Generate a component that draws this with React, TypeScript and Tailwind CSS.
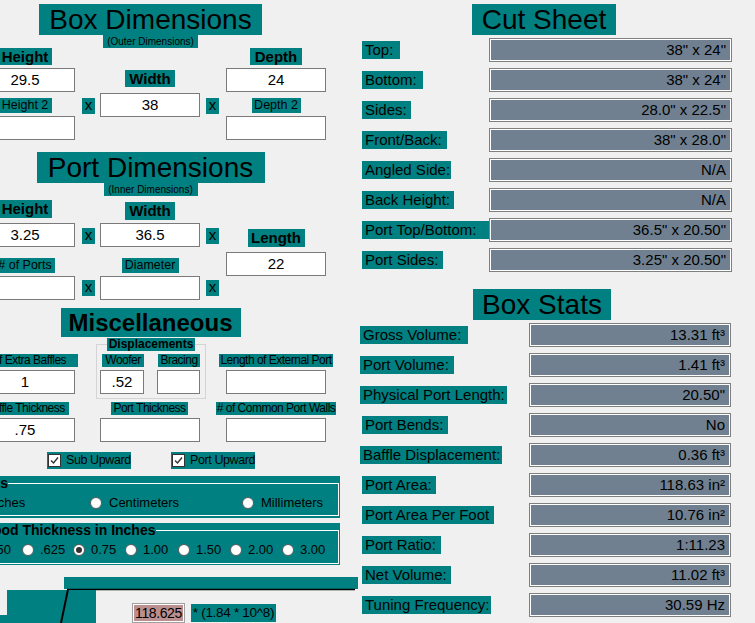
import React from "react";

const Box = ({ v, className = "" }: { v?: string; className?: string }) => (
  <div className={"h-[24px] w-[100px] border border-[#7a7a7a] bg-white text-center text-[15px] leading-[22px] " + className}>{v}</div>
);

const X = ({ className = "" }: { className?: string }) => (
  <div className={"h-[16px] w-[13px] bg-[#008080] text-center text-[15px] leading-[14px] " + className}>x</div>
);

const Radio = ({ checked }: { checked?: boolean }) => (
  <span className="flex h-[12px] w-[12px] shrink-0 items-center justify-center rounded-full border border-[#5a5a5a] bg-white">
    {checked && <span className="h-[6px] w-[6px] rounded-full bg-[#333]" />}
  </span>
);

const Check = ({ label }: { label: string }) => (
  <div className="flex h-[17px] w-[84px] items-center gap-[5px] whitespace-nowrap bg-[#008080] pl-[1px] text-[12.5px] tracking-[-0.4px]">
    <span className="flex h-[13px] w-[13px] shrink-0 items-center justify-center border border-[#333] bg-white">
      <svg width="9" height="9" viewBox="0 0 9 9">
        <path d="M1 4.5 L3.5 7 L8 1.5" stroke="#333" strokeWidth="1.4" fill="none" />
      </svg>
    </span>
    <span className="leading-[17px]">{label}</span>
  </div>
);

const Field = ({ v, className = "" }: { v: string; className?: string }) => (
  <div className={"ml-auto h-[24px] border border-[#7f7f7f] bg-[#708090] pr-[5px] text-right text-[15px] leading-[22px] shadow-[inset_0_0_0_1px_#ffffff] " + className}>{v}</div>
);

const cut: [string, string, string][] = [
  ["Top:", "w-[38px]", '38" x 24"'],
  ["Bottom:", "w-[61px]", '38" x 24"'],
  ["Sides:", "w-[49px]", '28.0" x 22.5"'],
  ["Front/Back:", "w-[85px]", '38" x 28.0"'],
  ["Angled Side:", "w-[89px]", "N/A"],
  ["Back Height:", "w-[92px]", "N/A"],
  ["Port Top/Bottom:", "w-[127px]", '36.5" x 20.50"'],
  ["Port Sides:", "w-[81px]", '3.25" x 20.50"'],
];

const stats: [string, string, string][] = [
  ["Gross Volume:", "w-[108px]", "13.31 ft³"],
  ["Port Volume:", "w-[94px]", "1.41 ft³"],
  ["Physical Port Length:", "w-[147px]", '20.50"'],
  ["Port Bends:", "ml-[2px] w-[86px]", "No"],
  ["Baffle Displacement:", "w-[142px]", "0.36 ft³"],
  ["Port Area:", "ml-[2px] w-[74px]", "118.63 in²"],
  ["Port Area Per Foot", "ml-[2px] w-[132px]", "10.76 in²"],
  ["Port Ratio:", "ml-[2px] w-[79px]", "1:11.23"],
  ["Net Volume:", "ml-[2px] w-[89px]", "11.02 ft³"],
  ["Tuning Frequency:", "ml-[2px] w-[129px]", "30.59 Hz"],
];

const ply: [string, string][] = [
  [".50", "w-[47px]"],
  [".625", "w-[51px]"],
  ["0.75", "w-[52px]"],
  ["1.00", "w-[53px]"],
  ["1.50", "w-[52px]"],
  ["2.00", "w-[52px]"],
  ["3.00", "w-[52px]"],
];

const small = "h-[13px] shrink-0 whitespace-nowrap bg-[#008080] text-center text-[12px] leading-[13px] tracking-[-0.5px]";

export default function App() {
  return (
    <div className="flex h-[623px] w-[755px] overflow-hidden bg-[#f0f0f0] font-['Liberation_Sans',Arial,sans-serif] text-black">
      {/* LEFT */}
      <div className="ml-[-25px] flex w-[385px] shrink-0 flex-col">
        <div className="flex w-[351px] flex-col">
          {/* Box Dimensions */}
          <div className="mx-auto mt-[4px] h-[31px] w-[223px] whitespace-nowrap bg-[#008080] text-center text-[28px] leading-[31px]">Box Dimensions</div>
          <div className="mx-auto h-[13px] w-[95px] whitespace-nowrap bg-[#008080] text-center text-[10px] leading-[13px]">(Outer Dimensions)</div>
          <div className="flex items-start">
            <div className="flex w-[100px] flex-col items-center">
              <div className="h-[17px] w-[53px] bg-[#008080] text-center text-[15px] font-bold leading-[17px]">Height</div>
              <Box v="29.5" className="mt-[3px]" />
              <div className="mt-[6px] h-[15px] w-[53px] whitespace-nowrap bg-[#008080] text-center text-[12.5px] leading-[15px]">Height 2</div>
              <Box className="mt-[3px]" />
            </div>
            <X className="ml-[7px] mt-[50px]" />
            <div className="ml-[5px] flex w-[100px] flex-col items-center">
              <div className="mt-[22px] h-[17px] w-[50px] bg-[#008080] text-center text-[15px] font-bold leading-[17px]">Width</div>
              <Box v="38" className="mt-[6px]" />
            </div>
            <X className="ml-[6px] mt-[50px]" />
            <div className="ml-[7px] flex w-[100px] flex-col items-center">
              <div className="h-[17px] w-[52px] bg-[#008080] text-center text-[15px] font-bold leading-[17px]">Depth</div>
              <Box v="24" className="mt-[3px]" />
              <div className="mt-[6px] h-[15px] w-[49px] whitespace-nowrap bg-[#008080] text-center text-[12.5px] leading-[15px]">Depth 2</div>
              <Box className="mt-[3px]" />
            </div>
          </div>

          {/* Port Dimensions */}
          <div className="mx-auto mt-[12px] h-[31px] w-[228px] whitespace-nowrap bg-[#008080] text-center text-[28px] leading-[31px]">Port Dimensions</div>
          <div className="mx-auto h-[13px] w-[94px] whitespace-nowrap bg-[#008080] text-center text-[10px] leading-[13px]">(Inner Dimensions)</div>
          <div className="mt-[4px] flex items-start">
            <div className="flex w-[100px] flex-col items-center">
              <div className="h-[18px] w-[53px] bg-[#008080] text-center text-[15px] font-bold leading-[18px]">Height</div>
              <Box v="3.25" className="mt-[5px]" />
              <div className="mt-[11px] h-[15px] w-[60px] whitespace-nowrap bg-[#008080] text-center text-[12.5px] leading-[15px]"># of Ports</div>
              <Box className="mt-[3px]" />
            </div>
            <div className="ml-[7px] flex flex-col">
              <X className="mt-[28px]" />
              <X className="mt-[36px]" />
            </div>
            <div className="ml-[5px] flex w-[100px] flex-col items-center">
              <div className="mt-[2px] h-[18px] w-[50px] bg-[#008080] text-center text-[15px] font-bold leading-[18px]">Width</div>
              <Box v="36.5" className="mt-[3px]" />
              <div className="mt-[11px] h-[15px] w-[57px] whitespace-nowrap bg-[#008080] text-center text-[12.5px] leading-[15px]">Diameter</div>
              <Box className="mt-[3px]" />
            </div>
            <div className="ml-[6px] flex flex-col">
              <X className="mt-[28px]" />
              <X className="mt-[36px]" />
            </div>
            <div className="ml-[7px] flex w-[100px] flex-col items-center">
              <div className="mt-[29px] h-[18px] w-[57px] bg-[#008080] text-center text-[15px] font-bold leading-[18px]">Length</div>
              <Box v="22" className="mt-[5px]" />
            </div>
          </div>

          {/* Miscellaneous */}
          <div className="mx-auto mt-[8px] h-[29px] w-[180px] whitespace-nowrap bg-[#008080] text-center text-[24px] font-bold leading-[29px]">Miscellaneous</div>
          <div className="flex items-start">
            <div className="flex w-[100px] flex-col items-center">
              <div className={"mt-[17px] w-[105px] " + small}># of Extra Baffles</div>
              <Box v="1" className="mt-[3px]" />
              <div className={"mt-[8px] w-[88px] " + small}>Baffle Thickness</div>
              <Box v=".75" className="mt-[3px]" />
            </div>
            <div className="ml-[21px] flex w-[110px] flex-col">
              <fieldset className="mt-[1px] border border-[#d4d4d4] pb-[4px]">
                <legend className="mx-auto h-[13px] w-[88px] whitespace-nowrap bg-[#008080] text-center text-[12px] font-bold leading-[13px]">Displacements</legend>
                <div className="flex pt-[3px]">
                  <div className="ml-[3px] flex w-[44px] flex-col">
                    <div className={"ml-[2px] w-[42px] " + small}>Woofer</div>
                    <Box v=".52" className="mt-[3px] !w-[44px]" />
                  </div>
                  <div className="ml-[13px] flex w-[43px] flex-col">
                    <div className={"ml-[1px] w-[42px] " + small}>Bracing</div>
                    <Box className="mt-[3px] !w-[43px]" />
                  </div>
                </div>
              </fieldset>
              <div className={"ml-[15px] mt-[3px] w-[77px] " + small}>Port Thickness</div>
              <Box className="ml-[4px] mt-[3px]" />
            </div>
            <div className="ml-[20px] flex w-[100px] flex-col items-center">
              <div className={"mt-[17px] w-[114px] " + small}>Length of External Port</div>
              <Box className="mt-[3px]" />
              <div className={"mt-[8px] w-[120px] " + small}># of Common Port Walls</div>
              <Box className="mt-[3px]" />
            </div>
          </div>
          <div className="mt-[10px] flex">
            <div className="ml-[72px]"><Check label="Sub Upward" /></div>
            <div className="ml-[40px]"><Check label="Port Upward" /></div>
          </div>
        </div>

        {/* Units */}
        <div className="ml-[-23px] mt-[7px] h-[42px] w-[388px] shrink-0 bg-[#008080]">
          <fieldset className="h-[40px] w-[387px] border border-white">
            <legend className="ml-[20px] whitespace-nowrap text-[14px] font-bold leading-[15px]">Units</legend>
            <div className="flex h-[24px] items-center whitespace-nowrap pl-[15px] text-[13px]">
              <div className="flex w-[122px] items-center gap-[7px]"><Radio /><span>Inches</span></div>
              <div className="flex w-[152px] items-center gap-[7px]"><Radio /><span>Centimeters</span></div>
              <div className="flex items-center gap-[7px]"><Radio /><span>Millimeters</span></div>
            </div>
          </fieldset>
        </div>

        {/* Plywood */}
        <div className="ml-[-23px] mt-[5px] h-[42px] w-[388px] shrink-0 bg-[#008080]">
          <fieldset className="h-[41px] w-[387px] border border-white">
            <legend className="ml-[8px] whitespace-nowrap text-[14px] font-bold leading-[15px]">Plywood Thickness in Inches</legend>
            <div className="flex h-[24px] items-center whitespace-nowrap pl-[22px] text-[13px]">
              {ply.map(([t, w]) => (
                <div key={t} className={"flex shrink-0 items-center gap-[6px] " + w}>
                  <Radio checked={t === "0.75"} />
                  <span>{t}</span>
                </div>
              ))}
            </div>
          </fieldset>
        </div>

        {/* Drawing */}
        <div className="relative mt-[12px] h-[46px] w-[385px] shrink-0">
          <svg className="block" width="385" height="46" viewBox="0 0 385 46">
            <rect x="89" y="0" width="294" height="12" fill="#008080" />
            <line x1="92" y1="12.5" x2="380" y2="12.5" stroke="#000" strokeWidth="1.5" />
            <rect x="32" y="13" width="89" height="33" fill="#008080" />
            <rect x="25" y="38" width="7" height="8" fill="#008080" />
            <path d="M93 12.5 L86 46" stroke="#000" strokeWidth="2" fill="none" />
          </svg>
          <div className="absolute left-[157px] top-[26px] h-[20px] w-[53px] whitespace-nowrap border border-[#a0a0a0] bg-[#bc8f8f] text-center text-[14px] leading-[18px] tracking-[-0.4px] shadow-[inset_0_0_0_1px_#ffffff]">118.625</div>
          <div className="absolute left-[216px] top-[27px] h-[18px] w-[85px] whitespace-nowrap bg-[#008080] text-center text-[13.5px] leading-[18px] tracking-[-0.3px]">* (1.84 * 10^8)</div>
        </div>
      </div>

      {/* RIGHT */}
      <div className="flex w-[395px] shrink-0 flex-col">
        <div className="ml-[112px] mt-[4px] h-[31px] w-[144px] whitespace-nowrap bg-[#008080] text-center text-[28px] leading-[31px]">Cut Sheet</div>
        <div className="mt-[3px] flex w-[372px] flex-col gap-[6px]">
          {cut.map(([l, w, v]) => (
            <div key={l} className="flex h-[24px] items-center">
              <div className={"ml-[2px] h-[18px] shrink-0 whitespace-nowrap bg-[#008080] pl-[3px] text-[15px] leading-[18px] " + w}>{l}</div>
              <Field v={v} className="w-[243px]" />
            </div>
          ))}
        </div>
        <div className="ml-[113px] mt-[17px] h-[31px] w-[138px] whitespace-nowrap bg-[#008080] text-center text-[28px] leading-[31px]">Box Stats</div>
        <div className="mt-[3px] flex w-[371px] flex-col gap-[6px]">
          {stats.map(([l, w, v]) => (
            <div key={l} className="flex h-[24px] items-center">
              <div className={"h-[18px] shrink-0 whitespace-nowrap bg-[#008080] pl-[3px] text-[15px] leading-[18px] " + w}>{l}</div>
              <Field v={v} className="w-[202px]" />
            </div>
          ))}
        </div>
      </div>
    </div>
  );
}
